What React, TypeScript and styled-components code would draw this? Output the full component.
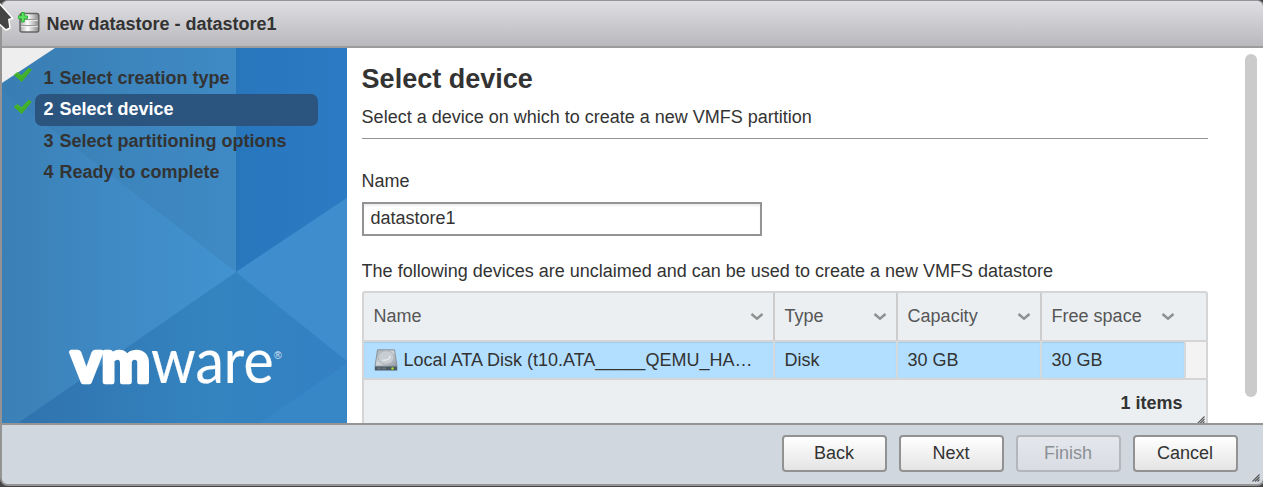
import React from 'react';
import styled, { createGlobalStyle } from 'styled-components';

const GlobalStyle = createGlobalStyle`
  *, *::before, *::after { box-sizing: border-box; }
  html, body { margin: 0; padding: 0; overflow: hidden; }
  body {
    background: #454545;
    color: #333;
    font: 18px/22px 'Liberation Sans', Arial, sans-serif;
  }
`;

const Screen = styled.div`
  position: relative;
  width: 1263px;
  height: 487px;
  overflow: hidden;
`;

const Dialog = styled.div`
  display: flex;
  flex-direction: column;
  width: 1265px;
  height: 486px;
  border: 2px solid #949494;
  border-top-width: 1px;
  border-radius: 8px;
  overflow: hidden;
  background: #d0d7df;
`;

const TitleBar = styled.header`
  display: flex;
  flex: 0 0 47px;
  align-items: center;
  gap: 5.5px;
  padding: 1px 0 0 16px;
  border-bottom: 2px solid #9c9c9c;
  background: linear-gradient(#dfdfe3, #b9b9bd);
  font-weight: 700;
`;

const Body = styled.div`
  display: flex;
  flex: 0 0 375px;
  overflow: hidden;
  background: #fff;
`;

const Sidebar = styled.nav`
  position: relative;
  flex: 0 0 345px;
  height: 375px;
`;

const Backdrop = styled.svg`
  position: absolute;
  inset: 0;
`;

const StepList = styled.ol`
  position: relative;
  margin: 0;
  padding: 14px 0 0 11px;
  list-style: none;
`;

const StepMark = styled.span`
  display: flex;
  flex: 0 0 22px;
  padding-top: 5px;
`;

const StepLabel = styled.span<{ $active?: boolean }>`
  display: flex;
  gap: 6px;
  width: 283px;
  height: 32px;
  padding: 0 8.5px;
  border-radius: 7px;
  line-height: 31px;
  white-space: nowrap;
  background: ${(p) => (p.$active ? '#2b547f' : 'transparent')};
  color: ${(p) => (p.$active ? '#fff' : '#333')};
`;

const Step = styled.li`
  display: flex;
  height: 31.5px;
  align-items: flex-start;
  font-weight: 700;
  &:nth-child(odd) ${StepLabel} { line-height: 33px; }
`;

const Content = styled.main`
  flex: 0 0 846px;
  margin-left: 15px;
  height: 375px;
  overflow: hidden;
`;

const Heading = styled.h1`
  margin: 14px 0 0 -0.4px;
  font-size: 27px;
  line-height: 34px;
`;

const Description = styled.p`
  height: 43px;
  margin: 0;
  padding-top: 10px;
  border-bottom: 1px solid #949494;
  text-indent: -0.4px;
`;

const FieldLabel = styled.label`
  display: block;
  margin-top: 31px;
  text-indent: -0.4px;
`;

const TextInput = styled.input`
  display: block;
  width: 400px;
  height: 34px;
  margin-top: 10px;
  padding: 0 6.5px 2px;
  border: 2px solid #949494;
  border-radius: 0;
  outline: 0;
  box-shadow: inset 0 2px 2px #eee;
  color: #333;
  font: inherit;
`;

const Hint = styled.p`
  margin: 24px 0 9px;
  text-indent: -0.4px;
`;

const Grid = styled.section`
  height: 160px;
  border: 2px solid #d5d5d5;
  border-radius: 3px;
  background: #ebeff2;
`;

const columns = '411px 123px 144px 1fr';

const HeaderRow = styled.div`
  display: grid;
  grid-template-columns: ${columns};
  height: 49px;
  border-bottom: 2px solid #d5d5d5;
  color: #565656;
`;

const HeaderCell = styled.div`
  display: flex;
  align-items: center;
  justify-content: space-between;
  padding: 0 9px 1px 9.6px;
  border-right: 2px solid #ccc;
  &:last-child { padding-right: 31px; border-right: 0; }
`;

const DataRow = styled.div`
  display: grid;
  grid-template-columns: 411px 123px 144px 144px 1fr;
  height: 38px;
  border-bottom: 2px solid #d5d5d5;
  background: #f3f3f3;
`;

const DataCell = styled.div`
  display: flex;
  align-items: center;
  gap: 6px;
  min-width: 0;
  padding: 0 9.6px;
  border-right: 2px solid #d5d9dc;
  background: #b2dfff;
  box-shadow: inset 0 1px 1px #9fcdec;
  white-space: nowrap;
`;

const GridFooter = styled.div`
  position: relative;
  display: flex;
  height: 45px;
  align-items: center;
  justify-content: flex-end;
  padding-right: 23.5px;
  font-weight: 700;
`;

const GridGrip = styled.span`
  position: absolute;
  right: 1px;
  bottom: 1px;
  display: flex;
`;

const ScrollTrack = styled.div`
  margin: 6px 0 0 37px;
`;

const ScrollThumb = styled.div`
  width: 12px;
  height: 343px;
  border-radius: 6px;
  background: #cbcbcb;
`;

const Footer = styled.footer`
  position: relative;
  display: flex;
  flex: 1;
  align-items: flex-start;
  justify-content: flex-end;
  gap: 12px;
  padding: 10px 25px 0 0;
  border-top: 2px solid #949494;
  background: #d0d7df;
`;

const Button = styled.button`
  width: 105px;
  height: 37px;
  padding: 0 1px 1px 0;
  border: 2px solid #929292;
  border-radius: 4px;
  background: linear-gradient(#fff, #e4e4e4);
  color: #333;
  font: inherit;
  &:disabled {
    border-color: #b3b7bc;
    background: linear-gradient(#e4e7ec, #d9dde3);
    color: #8b9095;
  }
`;

const DialogGrip = styled.span`
  position: absolute;
  right: 3px;
  bottom: 2px;
  display: flex;
`;

const Pointer = styled.svg`
  position: absolute;
  left: 0;
  top: 0;
`;

const Chevron = () => (
  <svg width="14" height="9" viewBox="0 0 14 9" fill="none">
    <path d="M1.500 2 7 6.700 12.500 2" stroke="#8f8f8f" strokeWidth="2.500" />
  </svg>
);

const Check = () => (
  <svg width="20" height="17" viewBox="0 0 20 17">
    <path d="M.8 8 4.400 5l4 3.300L15.800.8l3.100 1.900L8.700 15Z" fill="#3fae29" />
    <path d="M2 7.600 4.300 6l4.200 3.700L16 1.900" fill="none" stroke="#4cba35" />
  </svg>
);

const Grip = () => (
  <svg width="8" height="8" viewBox="0 0 8 8" stroke="#555" strokeWidth="1.100">
    <path d="M.5 7.500l7-7M3 7.500l4.500-4.500M5.500 7.500l2-2" />
  </svg>
);

const DatastoreIcon = () => (
  <svg width="23" height="24" viewBox="0 0 23 24">
    <defs>
      <linearGradient id="metal">
        <stop offset="0" stopColor="#aaa" />
        <stop offset=".4" stopColor="#fff" />
        <stop offset="1" stopColor="#888" />
      </linearGradient>
    </defs>
    <rect x="2" y="1.500" width="18.800" height="18.500" rx="2" fill="url(#metal)" stroke="#666" strokeWidth="1.500" />
    <path d="M3 7.500h17M3 13.500h17" stroke="#999" />
    <path d="M3 8.500h17M3 14.500h17" stroke="#eee" strokeWidth=".8" />
    <path d="M3.500.5h2.800v3.400h3.200v2.800H6.300v3.200H3.500V6.700H.3V3.900h3.200Z" fill="#5ee35e" stroke="#22a92e" strokeWidth=".9" />
  </svg>
);

const DiskIcon = () => (
  <svg width="24" height="22" viewBox="0 0 24 22">
    <defs>
      <linearGradient id="disk" x2="1" y2="1">
        <stop offset="0" stopColor="#a6adb3" />
        <stop offset=".5" stopColor="#d0d5d9" />
        <stop offset="1" stopColor="#8f969e" />
      </linearGradient>
    </defs>
    <path d="M3.500.8h17l2.500 16.500H1Z" fill="url(#disk)" stroke="#858c93" strokeWidth=".9" />
    <ellipse cx="12" cy="8.500" rx="8" ry="6.800" fill="#c7cdd2" stroke="#adb4bb" />
    <path d="M8.500 11q7 1 7.500-4" fill="none" stroke="#eef0f2" strokeWidth="1.200" />
    <path d="M.8 17.500h22.400v4H.8Z" fill="#4c5862" />
    <path d="M3 19.500h10" stroke="#65717c" strokeWidth="2" strokeDasharray="4 1" />
    <circle cx="18.500" cy="19.500" r="1.200" fill="#a5e229" />
  </svg>
);

const BrandPanel = () => (
  <Backdrop width="345" height="375" viewBox="2 48 345 375">
    <defs>
      <linearGradient id="left" gradientUnits="userSpaceOnUse" x1="2" y1="0" x2="236" y2="0">
        <stop offset="0" stopColor="#3b80b5" />
        <stop offset=".45" stopColor="#3f89c4" />
        <stop offset="1" stopColor="#4293d0" />
      </linearGradient>
      <linearGradient id="upper" gradientUnits="userSpaceOnUse" x1="2" y1="0" x2="236" y2="0">
        <stop offset="0" stopColor="#397eb3" />
        <stop offset="1" stopColor="#3f8ac5" />
      </linearGradient>
      <linearGradient id="lower" gradientUnits="userSpaceOnUse" x1="18" y1="0" x2="347" y2="0">
        <stop offset="0" stopColor="#3073ae" />
        <stop offset=".6" stopColor="#3484c0" />
        <stop offset="1" stopColor="#3480c3" />
      </linearGradient>
      <linearGradient id="right">
        <stop offset="0" stopColor="#2877bd" />
        <stop offset="1" stopColor="#2c7ac3" />
      </linearGradient>
    </defs>
    <path d="M2 48h345v375H2Z" fill="url(#left)" />
    <path d="M2 48h234v224L2 91Z" fill="url(#upper)" />
    <path d="M236 48h111v150L236 272Z" fill="url(#right)" />
    <path d="M347 198v163l-111-89Z" fill="#3f8dcc" />
    <path d="m236 272 111 89v62H18Z" fill="url(#lower)" />
    <path d="M347 363v60h-87Z" fill="#3787c7" />
    <path d="M2 48h53L2 83Z" fill="#eee" />
    <g fill="#fff" stroke="#fff" strokeLinejoin="round">
      <text x="71" y="382" fontFamily="Lato, sans-serif" fontWeight="700" fontSize="57" strokeWidth="4.500" textLength="79" lengthAdjust="spacingAndGlyphs">vm</text>
      <text x="151" y="383" fontFamily="Lato, sans-serif" fontWeight="400" fontSize="62" strokeWidth=".2" textLength="122.500" lengthAdjust="spacingAndGlyphs">ware</text>
      <text x="274" y="359" fontFamily="Liberation Sans, sans-serif" fontSize="10.500" stroke="none" opacity=".8">®</text>
    </g>
  </Backdrop>
);

const steps = [
  { label: 'Select creation type', done: true },
  { label: 'Select device', done: true, active: true },
  { label: 'Select partitioning options' },
  { label: 'Ready to complete' },
];

export default function App() {
  return (
    <Screen>
      <GlobalStyle />
      <Dialog>
        <TitleBar><DatastoreIcon />New datastore - datastore1</TitleBar>
        <Body>
          <Sidebar>
            <BrandPanel />
            <StepList>
              {steps.map((step, i) => (
                <Step key={step.label}>
                  <StepMark>{step.done && <Check />}</StepMark>
                  <StepLabel $active={step.active}><span>{i + 1}</span><span>{step.label}</span></StepLabel>
                </Step>
              ))}
            </StepList>
          </Sidebar>
          <Content>
            <Heading>Select device</Heading>
            <Description>Select a device on which to create a new VMFS partition</Description>
            <FieldLabel htmlFor="name">Name</FieldLabel>
            <TextInput id="name" defaultValue="datastore1" />
            <Hint>The following devices are unclaimed and can be used to create a new VMFS datastore</Hint>
            <Grid>
              <HeaderRow>
                {['Name', 'Type', 'Capacity', 'Free space'].map((name) => (
                  <HeaderCell key={name}>{name}<Chevron /></HeaderCell>
                ))}
              </HeaderRow>
              <DataRow>
                <DataCell><DiskIcon />Local ATA Disk (t10.ATA_____QEMU_HA…</DataCell>
                <DataCell>Disk</DataCell>
                <DataCell>30 GB</DataCell>
                <DataCell>30 GB</DataCell>
              </DataRow>
              <GridFooter>1 items<GridGrip><Grip /></GridGrip></GridFooter>
            </Grid>
          </Content>
          <ScrollTrack><ScrollThumb /></ScrollTrack>
        </Body>
        <Footer>
          <Button>Back</Button>
          <Button>Next</Button>
          <Button disabled>Finish</Button>
          <Button>Cancel</Button>
          <DialogGrip><Grip /></DialogGrip>
        </Footer>
      </Dialog>
      <Pointer width="16" height="34" viewBox="0 0 16 34">
        <path d="M-2 2 12.700 18.200 8.800 19.500 10 28 6 30-2 23Z" fill="#444" stroke="#fff" strokeWidth="1.500" strokeLinejoin="round" />
      </Pointer>
    </Screen>
  );
}
